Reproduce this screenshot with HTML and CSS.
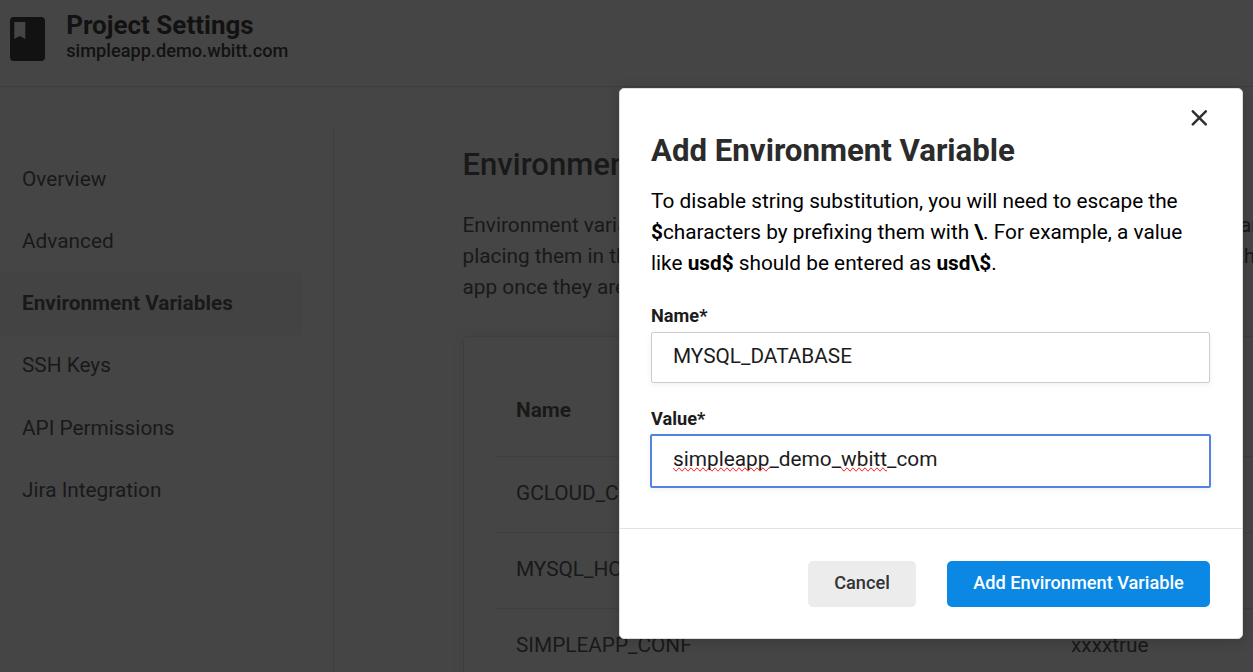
FILE: index.html
```html
<!DOCTYPE html>
<html lang="en">
<head>
<meta charset="utf-8">
<title>Project Settings</title>
<link rel="stylesheet" href="styles.css">
</head>
<body>
<div class="page">
  <header class="header">
    <svg class="logo" width="36" height="44" viewBox="0 0 36 44"><path fill="#121212" fill-rule="evenodd" d="M4 0H31Q35 0 35 4V40Q35 44 31 44H4Q0 44 0 40V4Q0 0 4 0ZM4.300 5V22L9.800 19L15.300 22V5Z"/></svg>
    <div>
      <h1 class="title">Project Settings</h1>
      <p class="domain">simpleapp.demo.wbitt.com</p>
    </div>
  </header>
  <div class="body">
    <nav class="nav">
      <a class="nav-item">Overview</a>
      <a class="nav-item">Advanced</a>
      <a class="nav-item active">Environment Variables</a>
      <a class="nav-item">SSH Keys</a>
      <a class="nav-item">API Permissions</a>
      <a class="nav-item">Jira Integration</a>
    </nav>
    <main class="main">
      <h2 class="heading">Environment Variables</h2>
      <div class="intro">
        <div class="line"><span>Environment variables</span><span class="tail">are</span></div>
        <div class="line"><span>placing them in the</span><span class="tail">the</span></div>
        <div class="line"><span>app once they are</span></div>
      </div>
      <div class="card">
        <div class="row head"><span>Name</span></div>
        <div class="row"><span>GCLOUD_CONF</span></div>
        <div class="row"><span>MYSQL_HOST</span></div>
        <div class="row"><span class="key">SIMPLEAPP_CONF</span><span>xxxxtrue</span></div>
      </div>
    </main>
  </div>
</div>
<section class="modal">
  <div class="modal-body">
    <svg class="close" width="17" height="17" viewBox="0 0 17 17"><path d="M1.800 1.300L14.800 14.300M14.800 1.300L1.800 14.300" stroke="#2f2f2f" stroke-width="2.500" stroke-linecap="round"/></svg>
    <h2 class="modal-title">Add Environment Variable</h2>
    <p class="help">To disable string substitution, you will need to escape the<br><b>$</b>characters by prefixing them with <b>\</b>. For example, a value<br>like <b>usd$</b> should be entered as <b>usd\$</b>.</p>
    <div class="label">Name*</div>
    <div class="field">MYSQL_DATABASE</div>
    <div class="label">Value*</div>
    <div class="field focus"><span class="misspelt">simpleapp</span>_demo_<span class="misspelt">wbitt</span>_com</div>
  </div>
  <footer class="actions">
    <button class="button">Cancel</button>
    <button class="button primary">Add Environment Variable</button>
  </footer>
</section>
</body>
</html>
```

FILE: styles.css
```css
* { box-sizing: border-box; }
html, body { margin: 0; height: 672px; overflow: hidden; }
body { background: #454545; color: #191919; font-family: Roboto, sans-serif; font-size: 20.800px; }
h1, h2, p { margin: 0; }
.page { width: 1253px; height: 672px; overflow: hidden; }
.header { display: flex; height: 87px; padding: 9px 0 0 9px; border-bottom: 1px solid #3c3c3c; color: #121212; }
.logo { margin: 8px 20.700px 0 0.500px; }
.title { font-size: 26px; line-height: 32px; font-weight: 700; }
.domain { font-size: 18.200px; line-height: 20px; font-weight: 500; }
.body { display: flex; height: 585px; padding-top: 41px; }
.nav { display: flex; flex-direction: column; width: 334px; flex: none; padding: 20.800px 31px 0 0; border-right: 1px solid #3d3d3d; }
.nav-item { height: 62.200px; padding-left: 22px; line-height: 60px; flex: none; }
.nav-item.active { background: #434343; font-weight: 700; }
.main { width: 919px; padding: 17px 0 0 129px; flex: none; }
.heading { margin-left: -0.500px; font-size: 31.100px; line-height: 40px; font-weight: 500; }
.intro { margin-left: -0.500px; padding-top: 25px; line-height: 31px; }
.line { display: flex; justify-content: space-between; height: 31px; white-space: nowrap; }
.tail { width: 12px; }
.line:first-child .tail { width: 13px; }
.line:nth-child(2) .tail { width: 16px; }
.card { margin-top: 33px; height: 400px; padding: 28px 0 0 32px; border: 1px solid #3e3e3e; border-right: 0; border-radius: 5px 0 0 0; box-shadow: 0 0 14px rgba(0,0,0,.06); }
.row { display: flex; height: 76px; padding-left: 20px; line-height: 73px; border-bottom: 1px solid #3e3e3e; }
.row.head { height: 92px; line-height: 90px; font-weight: 700; }
.key { width: 555px; }
.modal { position: absolute; left: 619px; top: 88px; width: 624px; height: 551px; background: #fff; border: 1px solid #ddd; border-radius: 5px; box-shadow: 0 2px 14px rgba(0,0,0,.18); color: #000; }
.modal-body { display: flex; flex-direction: column; height: 440px; padding: 21px 32px 0 31px; border-bottom: 1px solid #e2e2e2; }
.close { align-self: flex-end; margin-right: 2px; flex: none; }
.modal-title { margin-top: 4px; font-size: 31.200px; line-height: 40px; font-weight: 700; color: #2b2b2b; }
.help { padding: 15px 0 26px; line-height: 31px; white-space: nowrap; }
.label { font-size: 18.200px; line-height: 22px; height: 27px; font-weight: 700; color: #1c1c1c; }
.field { height: 51px; margin-bottom: 25px; padding-left: 21px; border: 1px solid #ccc; border-radius: 2px; line-height: 47px; color: #1c1c1c; box-shadow: 0 2px 6px rgba(0,0,0,.06); }
.field.focus { height: 54px; margin: -1px -1px 0; border: 2px solid #5383e0; line-height: 47px; }
.misspelt { text-decoration: spelling-error; }
.actions { display: flex; justify-content: flex-end; gap: 31px; padding: 32px 32px 0 0; }
.button { width: 108px; height: 46px; padding: 0 0 3px; border: 0; border-radius: 5px; background: #ececec; color: #333; font: 500 18.200px Roboto, sans-serif; }
.button.primary { width: 263px; background: #0b88e3; color: #fff; }
```
